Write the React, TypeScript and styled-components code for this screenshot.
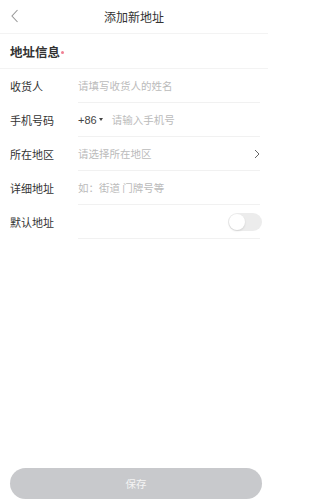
import styled, { createGlobalStyle } from 'styled-components';

const GlobalStyle = createGlobalStyle`
  html, body {
    margin: 0;
    padding: 0;
    background: #ffffff;
  }
  body {
    font-family: "Noto Sans CJK SC", "Noto Sans", sans-serif;
    color: #333;
  }
`;

const Page = styled.div`
  width: 268px;
  height: 500px;
  display: flex;
  flex-direction: column;
  background: #fff;
  overflow: hidden;
`;

const Header = styled.div`
  height: 33px;
  display: flex;
  align-items: center;
  justify-content: center;
  position: relative;
  border-bottom: 1px solid #f3f3f3;
  font-size: 12px;
  color: #333;
`;

const Back = styled.svg`
  position: absolute;
  left: 10px;
  top: 8px;
`;

const Section = styled.div`
  height: 34px;
  display: flex;
  align-items: center;
  padding-left: 10px;
  border-bottom: 1px solid #f3f3f3;
  font-size: 12.5px;
  font-weight: 700;
  color: #333;
`;

const Star = styled.span`
  align-self: center;
  width: 3px;
  height: 3px;
  border-radius: 50%;
  background: #f07f93;
  margin: 3px 0 0 1px;
`;

const Row = styled.div`
  height: 34px;
  display: flex;
  align-items: center;
  padding-left: 10px;
`;

const Label = styled.div`
  width: 68px;
  flex-shrink: 0;
  font-size: 11px;
  color: #333;
`;

const Field = styled.div`
  flex: 1;
  align-self: stretch;
  display: flex;
  align-items: center;
  margin-right: 8px;
  border-bottom: 1px solid #f1f1f1;
  font-size: 10.5px;
  color: #bbb;
`;

const Code = styled.span`
  color: #444;
  font-size: 11px;
  font-family: "Liberation Sans", Arial, sans-serif;
  display: flex;
  align-items: center;
  margin-right: 9px;
`;

const Caret = styled.span`
  width: 0;
  height: 0;
  margin-left: 2px;
  border-left: 2px solid transparent;
  border-right: 2px solid transparent;
  border-top: 3px solid #444;
`;

const Grow = styled.span`
  flex: 1;
`;

const Toggle = styled.div`
  width: 34px;
  height: 18px;
  border-radius: 9px;
  background: #ececec;
  position: relative;
  margin-right: -2px;
`;

const Knob = styled.div`
  position: absolute;
  left: 1px;
  top: 1px;
  width: 16px;
  height: 16px;
  border-radius: 50%;
  background: #fff;
  box-shadow: 0 1px 2px rgba(0, 0, 0, 0.12);
`;

const Spacer = styled.div`
  flex: 1;
`;

const SaveButton = styled.button`
  margin: 0 6px 1px 10px;
  height: 31px;
  border: none;
  border-radius: 16px;
  background: #c8c9cc;
  color: #f4f4f4;
  font-size: 10.5px;
  font-family: "Noto Sans CJK SC", sans-serif;
`;

export default function App() {
  return (
    <Page>
      <GlobalStyle />
      <Header>
        <Back width="10" height="16" viewBox="0 0 10 16">
          <path d="M7.5 2 L2 8 L7.5 14" fill="none" stroke="#999" strokeWidth="1.1" />
        </Back>
        添加新地址
      </Header>
      <Section>
        地址信息<Star />
      </Section>
      <Row>
        <Label>收货人</Label>
        <Field>请填写收货人的姓名</Field>
      </Row>
      <Row>
        <Label>手机号码</Label>
        <Field>
          <Code>
            +86<Caret />
          </Code>
          请输入手机号
        </Field>
      </Row>
      <Row>
        <Label>所在地区</Label>
        <Field>
          <Grow>请选择所在地区</Grow>
          <svg width="6" height="10" viewBox="0 0 6 10">
            <path d="M1 1 L5 5 L1 9" fill="none" stroke="#666" strokeWidth="1" />
          </svg>
        </Field>
      </Row>
      <Row>
        <Label>详细地址</Label>
        <Field>如：街道 门牌号等</Field>
      </Row>
      <Row>
        <Label>默认地址</Label>
        <Field>
          <Grow />
          <Toggle>
            <Knob />
          </Toggle>
        </Field>
      </Row>
      <Spacer />
      <SaveButton>保存</SaveButton>
    </Page>
  );
}
